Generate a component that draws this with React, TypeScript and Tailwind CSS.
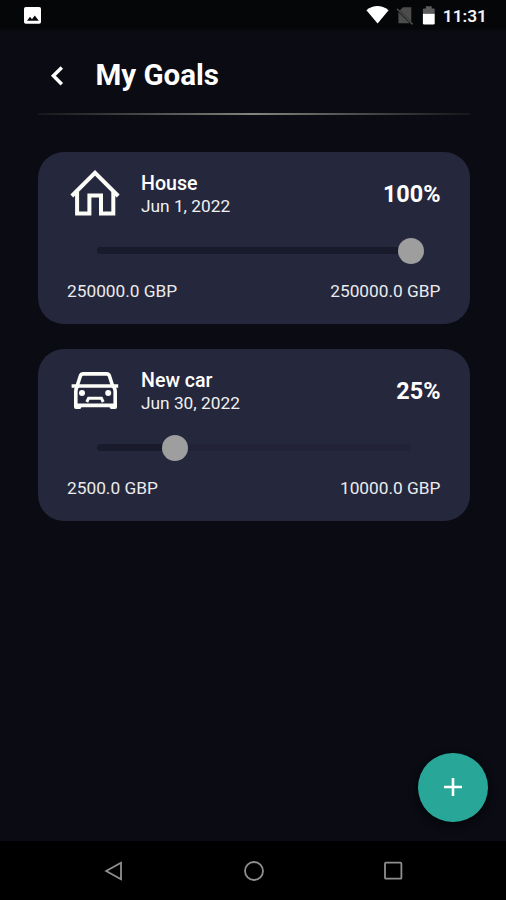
import type { ReactNode } from 'react';

interface Goal {
  name: string;
  date: string;
  saved: number;
  target: number;
  icon: ReactNode;
}

function HouseIcon() {
  return (
    <svg width="50" height="50" viewBox="70 168 50 50" fill="none" stroke="#fdfdf8" strokeWidth="4">
      <path d="M71.8 196 95 172.8l23.2 23.2" />
      <path d="M77.1 191.5v21.9H89.4v-17.9h11.6v17.9h12.3v-21.9" />
    </svg>
  );
}

function CarIcon() {
  return (
    <svg width="50" height="50" viewBox="70 365 50 50" fill="none" stroke="#fdfdf8" strokeWidth="3.6">
      <path d="M77 386.5 80.4 375.8Q81.2 373.9 83.2 373.9H106.6Q108.6 373.9 109.4 375.8L112.8 386.5" />
      <path d="M71.6 386H118.2" strokeWidth="3.6" />
      <path d="M78 385.5Q75.8 388 75.8 391.5V405.4H115.2V391.5Q115.2 388 112.5 385.5" />
      <path d="M74 404h7.4v3.1q0 1.9-1.9 1.9h-3.6q-1.9 0-1.9-1.9zM109.6 404h7.4v3.1q0 1.9-1.9 1.9h-3.6q-1.9 0-1.9-1.9z" fill="#fdfdf8" stroke="none" />
      <circle cx="82" cy="393" r="3" fill="#fdfdf8" stroke="none" />
      <circle cx="108.2" cy="393" r="3" fill="#fdfdf8" stroke="none" />
      <path d="M86.8 402 88.6 398.2H101.4L103.2 402" strokeWidth="3" />
    </svg>
  );
}

const goals: Goal[] = [
  { name: 'House', date: 'Jun 1, 2022', saved: 250000, target: 250000, icon: <HouseIcon /> },
  { name: 'New car', date: 'Jun 30, 2022', saved: 2500, target: 10000, icon: <CarIcon /> },
];

function StatusBar() {
  return (
    <div className="flex h-8 items-center justify-between bg-linear-to-b from-[#050608] from-85% to-[#0a0b13] pl-6 pr-[19px]">
      <svg width="18" height="18" viewBox="0 0 18 18">
        <rect x="0" y="0" width="17" height="16.8" rx="1.8" fill="#fff" />
        <path d="M3 13.8 6 9.8l2 2.4 2.8-3.8 4 5.4z" fill="#08080c" />
      </svg>
      <div className="flex items-center">
        <svg width="80" height="22" viewBox="363 5 80 22">
          <path d="M366.4 10.2q11-8.4 22.2 0L377.6 23.4z" fill="#fff" />
          <path d="M403 7.2h8.3v14.6L399.8 10.3zM398.4 12v11.2h11.2z" fill="#4c4c4c" />
          <path d="m397 8.8 15.6 15.6" stroke="#4c4c4c" strokeWidth="1.6" />
          <path d="M422.9 13.8v-4.4q0-1 1-1h2V6.3h5.8v2.1h2q1 0 1 1v4.4z" fill="#5c5c5c" />
          <path d="M422.9 13.8h11.8v9.4q0 1.3-1.3 1.3h-9.2q-1.3 0-1.3-1.3z" fill="#fff" />
        </svg>
        <span className="pt-px text-[17.3px] leading-none font-semibold text-[#f4f4f4]">11:31</span>
      </div>
    </div>
  );
}

function Header() {
  return (
    <header className="pr-9 pl-[37.5px]">
      <div className="flex h-[81px] items-center pt-[6px] pl-3">
        <svg width="16" height="22" viewBox="0 0 16 22" fill="none" stroke="#fff" strokeWidth="3.5">
          <path d="M11.8 2.4 3.4 10.8l8.4 8.4" />
        </svg>
        <h1 className="ml-[30px] text-[29.5px] leading-none font-bold text-white">My Goals</h1>
      </div>
      <div className="h-[2px] bg-linear-to-r from-[#17171b] via-[#85857f] to-[#17171b]" />
    </header>
  );
}

function GoalCard({ goal }: { goal: Goal }) {
  const percent = Math.round((goal.saved / goal.target) * 100);

  return (
    <section className="h-[172px] rounded-[26px] bg-[#25273d] px-[29.5px] pt-4">
      <div className="flex h-[50px] items-center">
        <div className="ml-[2.5px]">{goal.icon}</div>
        <div className="ml-[21.5px] flex-1 pt-1">
          <h2 className="text-[19.6px] leading-[22px] font-medium text-white">{goal.name}</h2>
          <p className="text-[17.3px] leading-[22px] text-[#f0f0f0]">{goal.date}</p>
        </div>
        <span className="pt-[5px] text-[23.4px] leading-none font-bold text-white">{percent}%</span>
      </div>
      <div className="mx-[29.5px] mt-[20px] flex h-[26px] items-center">
        <div className="relative h-[7px] w-full rounded-full bg-[#222338]">
          <div className="h-full rounded-full bg-[#191a2c]" style={{ width: `${percent}%` }} />
          <div
            className="absolute top-1/2 size-[26px] -translate-x-1/2 -translate-y-1/2 rounded-full bg-[#9e9e9e]"
            style={{ left: `${percent}%` }}
          />
        </div>
      </div>
      <div className="mt-[16px] flex justify-between text-[17.3px] leading-[22px] text-[#ebebeb]">
        <span>{goal.saved.toFixed(1)} GBP</span>
        <span>{goal.target.toFixed(1)} GBP</span>
      </div>
    </section>
  );
}

function NavigationBar() {
  return (
    <nav className="flex h-[59px] items-center justify-between bg-black pr-[102px] pl-[103px]">
      <svg width="22" height="22" viewBox="0 0 22 22" fill="none" stroke="#8f8f8f" strokeWidth="1.8">
        <path d="M18 2.8v16.4L3.2 11z" />
      </svg>
      <svg width="22" height="22" viewBox="0 0 22 22" fill="none" stroke="#8f8f8f" strokeWidth="1.8">
        <circle cx="11" cy="11" r="9" />
      </svg>
      <svg width="22" height="22" viewBox="0 0 22 22" fill="none" stroke="#8f8f8f" strokeWidth="1.8">
        <rect x="3" y="2.7" width="16.4" height="16" rx="1" />
      </svg>
    </nav>
  );
}

export default function App() {
  return (
    <div className="flex h-[900px] w-[506px] flex-col overflow-hidden bg-[#0a0b13] font-['Roboto',sans-serif]">
      <StatusBar />
      <Header />
      <main className="flex flex-1 flex-col gap-[25px] pt-[36.5px] pr-9 pl-[37.5px]">
        {goals.map(goal => (
          <GoalCard key={goal.name} goal={goal} />
        ))}
      </main>
      <div className="flex justify-end pr-[18.5px] pb-[19px]">
        <button
          aria-label="Add goal"
          className="flex size-[69.5px] items-center justify-center rounded-full bg-[#28a799] shadow-[0_3px_8px_rgba(0,0,0,0.6)]"
        >
          <svg width="20" height="20" viewBox="0 0 20 20" stroke="#fff" strokeWidth="2.6">
            <path d="M10 1v18M1 10h18" />
          </svg>
        </button>
      </div>
      <NavigationBar />
    </div>
  );
}
